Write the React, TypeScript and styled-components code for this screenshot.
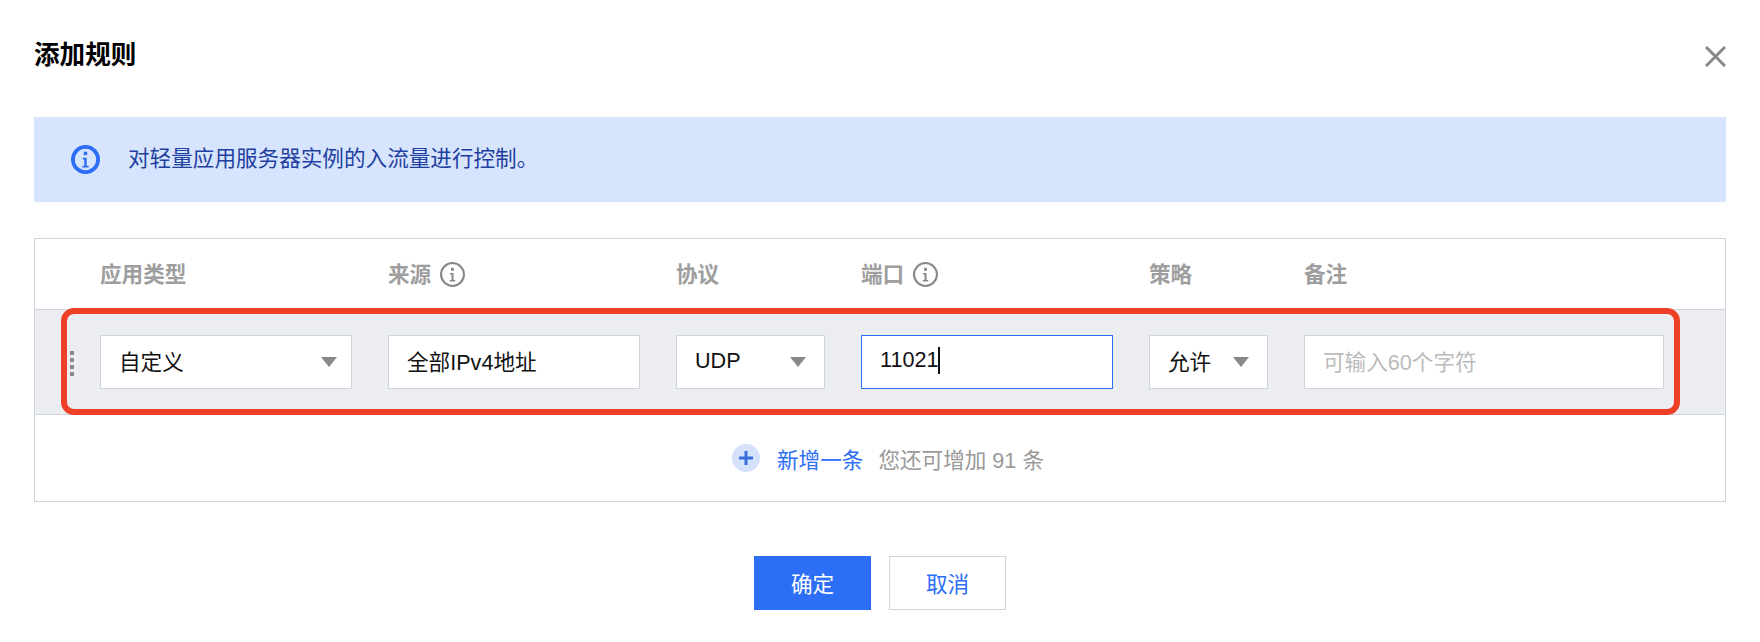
import React from 'react'
import styled, { createGlobalStyle } from 'styled-components'

const GlobalStyle = createGlobalStyle`
  html, body {
    margin: 0;
    padding: 0;
    background: #fff;
  }
  body {
    font-family: "Liberation Sans", "Noto Sans CJK SC", sans-serif;
    font-size: 21.6px;
    color: #000;
  }
`

const Dialog = styled.div`
  width: 1760px;
  height: 642px;
  box-sizing: border-box;
  padding: 0 34px;
  overflow: hidden;
`

const TitleBar = styled.div`
  height: 117px;
  box-sizing: border-box;
  padding-bottom: 7px;
  display: flex;
  align-items: center;
  justify-content: space-between;
`

const Title = styled.h2`
  margin: 0;
  font-size: 25.6px;
  line-height: 34px;
  font-weight: 700;
  color: #000;
`

const CloseButton = styled.button`
  border: 0;
  background: none;
  padding: 0;
  width: 21px;
  height: 21px;
  display: block;
  color: #888;
  margin-top: 3px;
`

const Notice = styled.div`
  height: 85px;
  box-sizing: border-box;
  padding: 0 0 1px 37px;
  background: #d6e5fd;
  display: flex;
  align-items: center;
  gap: 28px;
  color: #1f3f9f;
  line-height: 30px;
`

const Table = styled.div`
  margin-top: 36px;
  border: 1px solid #cfd5de;
`

const Columns = styled.div`
  display: grid;
  grid-template-columns: 252px 252px 149px 252px 119px 360px;
  column-gap: 36px;
  padding-left: 65px;
`

const HeaderRow = styled(Columns)`
  height: 70px;
  box-sizing: border-box;
  padding-top: 1px;
  align-items: center;
`

const HeaderCell = styled.div`
  display: flex;
  align-items: center;
  gap: 9px;
  font-weight: 700;
  color: #9e9e9e;
  line-height: 30px;
`

const BodyRow = styled(Columns)`
  position: relative;
  height: 106px;
  box-sizing: border-box;
  align-items: center;
  background: #ebedf1;
  border-top: 1px solid #cfd5de;
  border-bottom: 1px solid #cfd5de;
`

const Highlight = styled.div`
  position: absolute;
  left: 26px;
  right: 45px;
  top: -2px;
  bottom: -1px;
  border: 6px solid #ee4026;
  border-radius: 13px;
  pointer-events: none;
`

const DragHandle = styled.div`
  position: absolute;
  left: 35px;
  top: 41px;
  display: grid;
  grid-template-rows: repeat(4, 4px);
  row-gap: 3px;
`

const DragDot = styled.span`
  width: 4px;
  height: 4px;
  background: #888;
`

const Field = styled.div<{ $focused?: boolean; $placeholder?: boolean }>`
  height: 54px;
  box-sizing: border-box;
  background: #fff;
  border: 1px solid ${({ $focused }) => ($focused ? '#2d6ef6' : '#cfd5de')};
  padding: 0 14px 3px 18px;
  display: flex;
  align-items: center;
  justify-content: space-between;
  color: ${({ $placeholder }) => ($placeholder ? '#bbb' : '#111')};
  white-space: nowrap;
`

const Caret = styled.span`
  display: inline-block;
  width: 2px;
  height: 27px;
  background: #111;
  vertical-align: middle;
`

const SelectArrow = styled.span<{ $inset?: boolean }>`
  width: 0;
  height: 0;
  margin-top: 3px;
  margin-right: ${({ $inset }) => ($inset ? '4px' : '0')};
  border-left: 8px solid transparent;
  border-right: 8px solid transparent;
  border-top: 10px solid #888;
`

const AddRow = styled.div`
  height: 86px;
  display: flex;
  align-items: center;
  justify-content: center;
  color: #999;
  padding-left: 16px;
`

const AddIcon = styled.span`
  width: 28px;
  height: 28px;
  border-radius: 50%;
  background: #d6e2fa;
  color: #3a70dc;
  display: flex;
  align-items: center;
  justify-content: center;
  margin-right: 17px;
`

const AddLink = styled.a`
  color: #2d6ef6;
  margin-right: 15px;
`

const Footer = styled.div`
  margin-top: 54px;
  display: flex;
  justify-content: center;
  gap: 18px;
`

const Button = styled.button<{ $primary?: boolean }>`
  width: 117px;
  height: 54px;
  box-sizing: border-box;
  font: inherit;
  padding: 0 0 2px;
  background: ${({ $primary }) => ($primary ? '#2d6ef6' : '#fff')};
  color: ${({ $primary }) => ($primary ? '#fff' : '#2d6ef6')};
  border: ${({ $primary }) => ($primary ? '0' : '1px solid #cfd5de')};
`

function InfoGlyph({ size, stroke }: { size: number; stroke: number }) {
  return (
    <svg width={size} height={size} viewBox="0 0 24 24" fill="none" style={{ flexShrink: 0, display: 'block' }}>
      <circle cx="12" cy="12" r={12 - stroke / 2} stroke="currentColor" strokeWidth={stroke} />
      <rect x="10.6" y="5.6" width="2.8" height="2.8" fill="currentColor" />
      <path d="M9.6 10.600h3.400v6.600h1.600v1.400H9.400v-1.400h1.600v-5.200H9.600z" fill="currentColor" />
    </svg>
  )
}

const NoticeIcon = styled.span`
  color: #2d6ef6;
  display: block;
`

const HeaderIcon = styled.span`
  color: #888;
  display: block;
`

const columns = [
  { label: '应用类型' },
  { label: '来源', info: true },
  { label: '协议' },
  { label: '端口', info: true },
  { label: '策略' },
  { label: '备注' }
]

export default function App() {
  return (
    <Dialog>
      <GlobalStyle />
      <TitleBar>
        <Title>添加规则</Title>
        <CloseButton aria-label="关闭">
          <svg width="21" height="21" viewBox="0 0 21 21" fill="none" style={{ display: 'block' }}>
            <path d="M1 1l19 19M20 1L1 20" stroke="currentColor" strokeWidth="3" />
          </svg>
        </CloseButton>
      </TitleBar>
      <Notice>
        <NoticeIcon>
          <InfoGlyph size={29} stroke={3.2} />
        </NoticeIcon>
        <span>对轻量应用服务器实例的入流量进行控制。</span>
      </Notice>
      <Table>
        <HeaderRow>
          {columns.map(column => (
            <HeaderCell key={column.label}>
              {column.label}
              {column.info && (
                <HeaderIcon>
                  <InfoGlyph size={25} stroke={2} />
                </HeaderIcon>
              )}
            </HeaderCell>
          ))}
        </HeaderRow>
        <BodyRow>
          <DragHandle>
            <DragDot />
            <DragDot />
            <DragDot />
            <DragDot />
          </DragHandle>
          <Field>
            自定义
            <SelectArrow />
          </Field>
          <Field>全部IPv4地址</Field>
          <Field>
            UDP
            <SelectArrow $inset />
          </Field>
          <Field $focused>
            <span>
              11021
              <Caret />
            </span>
          </Field>
          <Field>
            允许
            <SelectArrow $inset />
          </Field>
          <Field $placeholder>可输入60个字符</Field>
          <Highlight />
        </BodyRow>
        <AddRow>
          <AddIcon>
            <svg width="16" height="16" viewBox="0 0 16 16" style={{ display: 'block' }}>
              <path d="M6.500 1h3v5.500h5.500v3H9.500v5.500h-3V9.500H1v-3h5.500z" fill="currentColor" />
            </svg>
          </AddIcon>
          <AddLink>新增一条</AddLink>
          您还可增加 91 条
        </AddRow>
      </Table>
      <Footer>
        <Button $primary>确定</Button>
        <Button>取消</Button>
      </Footer>
    </Dialog>
  )
}
